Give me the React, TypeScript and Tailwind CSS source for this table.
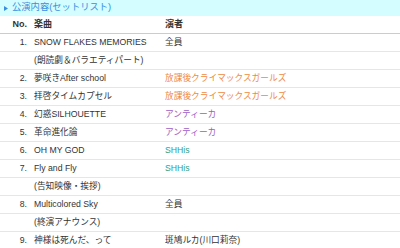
const ORANGE = "text-[#ef8a3c]";
const PURPLE = "text-[#a05cc4]";
const GREEN = "text-[#35a07f]";

type Row = { no?: string; title: string; by?: string; color?: string };

const rows: Row[] = [
  { no: "1.", title: "SNOW FLAKES MEMORIES", by: "全員" },
  { title: "(朗読劇＆バラエティパート)" },
  { no: "2.", title: "夢咲きAfter school", by: "放課後クライマックスガールズ", color: ORANGE },
  { no: "3.", title: "拝啓タイムカプセル", by: "放課後クライマックスガールズ", color: ORANGE },
  { no: "4.", title: "幻惑SILHOUETTE", by: "アンティーカ", color: PURPLE },
  { no: "5.", title: "革命進化論", by: "アンティーカ", color: PURPLE },
  { no: "6.", title: "OH MY GOD", by: "SHHis", color: GREEN },
  { no: "7.", title: "Fly and Fly", by: "SHHis", color: GREEN },
  { title: "(告知映像・挨拶)" },
  { no: "8.", title: "Multicolored Sky", by: "全員" },
  { title: "(終演アナウンス)" },
  { no: "9.", title: "神様は死んだ、って", by: "斑鳩ルカ(川口莉奈)" },
];

export default function App() {
  return (
    <div
      className="w-[400px] h-[248px] overflow-hidden bg-white text-[8.7px] text-[#333]"
      style={{ fontFamily: '"Liberation Sans", "Noto Sans CJK JP", sans-serif' }}
    >
      <div className="flex h-[16px] items-center bg-[#d4fdff] pl-[4px] text-[9.3px] text-[#3a8ee0]">
        <svg width="4" height="5" viewBox="0 0 4 5" className="mr-[4px]">
          <path d="M0 0 L4 2.5 L0 5 Z" fill="#3a8ee0" />
        </svg>
        公演内容(セットリスト)
      </div>

      <div className="flex h-[18px] items-center border-b border-[#cccccc] text-[9px] font-bold">
        <div className="w-[27px] text-right">No.</div>
        <div className="ml-[7px] w-[131px]">楽曲</div>
        <div>演者</div>
      </div>

      {rows.map((r, i) => (
        <div key={i} className="flex h-[18px] items-center border-b border-[#e6e6e6]">
          <div className="w-[27px] text-right">{r.no}</div>
          <div className="ml-[7px] w-[131px] whitespace-nowrap">{r.title}</div>
          <div className={`whitespace-nowrap ${r.color ?? ""}`}>{r.by}</div>
        </div>
      ))}
    </div>
  );
}
